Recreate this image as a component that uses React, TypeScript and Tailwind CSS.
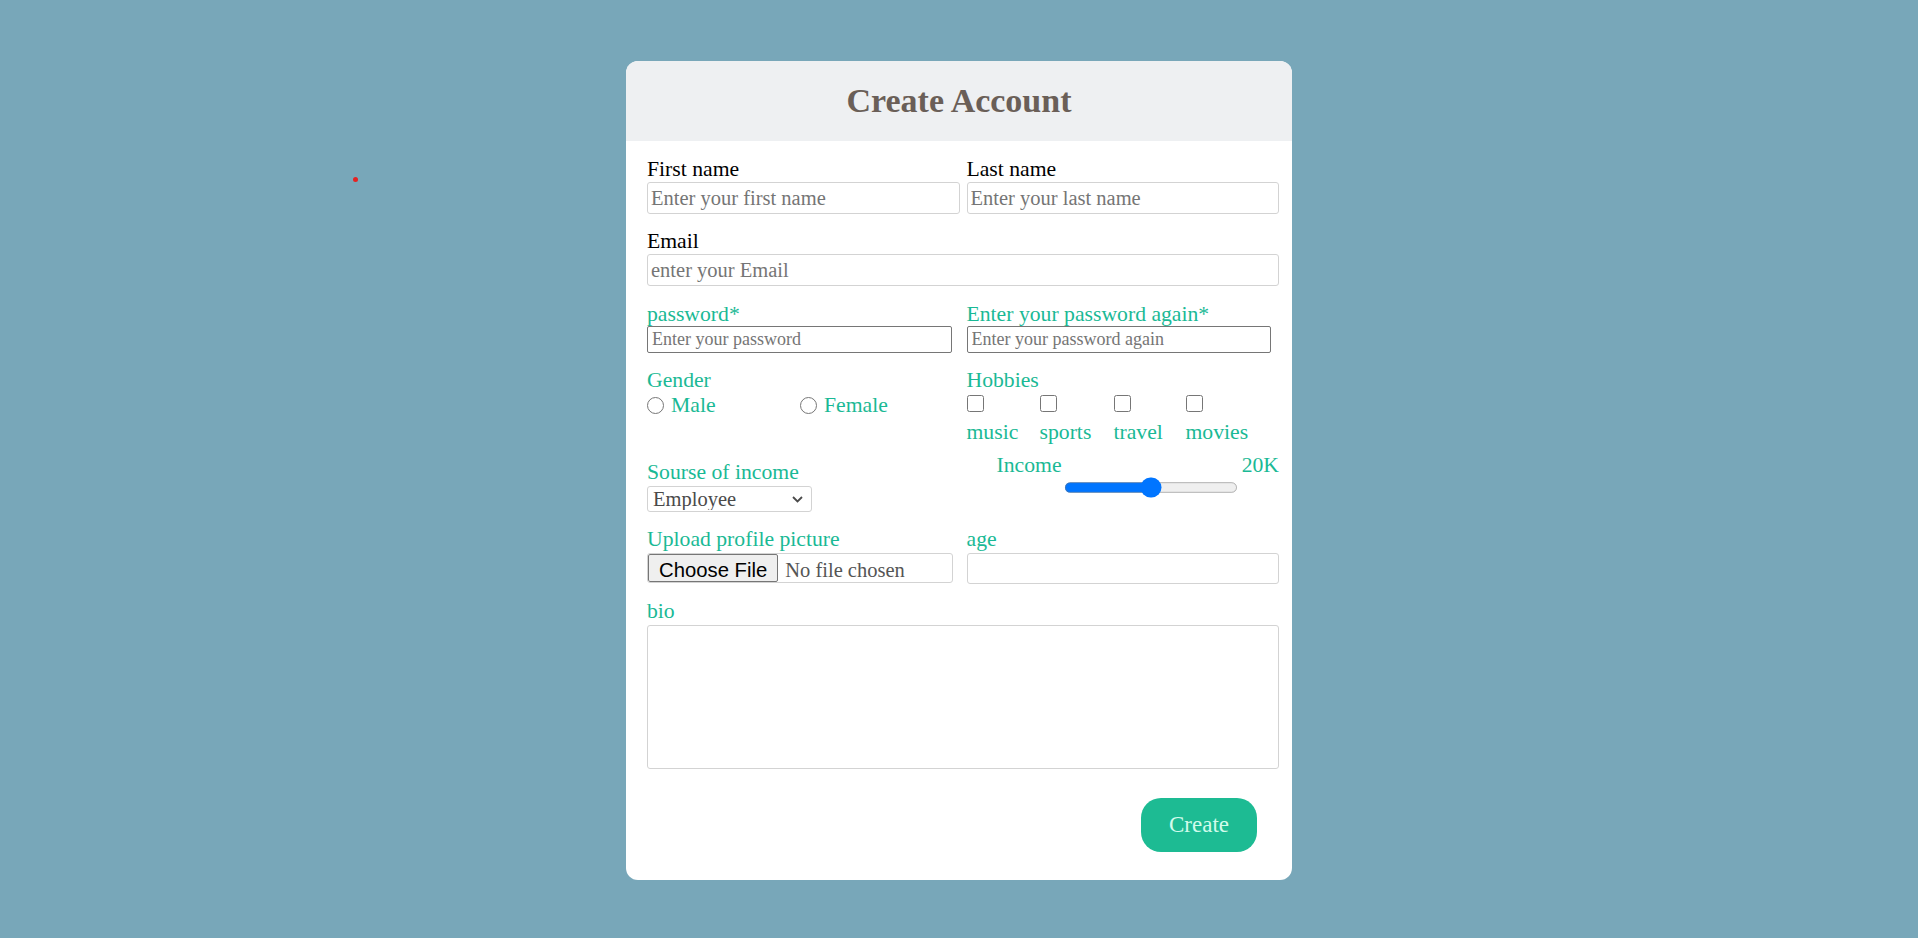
import React from 'react';

const HOBBIES = [
  { id: 'music', w: 'w-[73px]' },
  { id: 'sports', w: 'w-[74px]' },
  { id: 'travel', w: 'w-[72px]' },
  { id: 'movies', w: 'w-auto' },
];

const label = "block h-[24px] leading-[24px] text-[21.7px] text-[#1ab995] whitespace-nowrap";
const softInput =
  "block w-full border border-[#d3d3d3] rounded-[3px] bg-white px-[3px] text-[20.5px] text-black placeholder:text-[#757575] outline-none";

const App = () => {
  return (
    <div className="relative min-h-screen bg-[#78a7b9] pt-[61px] pb-[59px] font-['Liberation_Serif',serif]">
      {/* stray dot in the shot */}
      <div className="absolute left-[353px] top-[177px] w-[5px] h-[5px] rounded-full bg-[#e52222]" />

      <div className="mx-auto w-[666px] rounded-[12px] bg-white overflow-hidden">
        <div className="h-[80px] bg-[#eef0f2] flex items-center justify-center">
          <h1 className="text-[34px] font-bold leading-none text-[#6a5f58]">Create Account</h1>
        </div>

        <form className="pt-[16px] pl-[21px] pr-[13px] pb-[28px]" onSubmit={(e) => e.preventDefault()}>
          {/* names */}
          <div className="grid grid-cols-2 gap-x-[7px]">
            <div>
              <label className="block h-[24px] leading-[24px] text-[21.7px] text-black">First name</label>
              <input className={`${softInput} mt-[1px] h-[32px]`} placeholder="Enter your first name" />
            </div>
            <div>
              <label className="block h-[24px] leading-[24px] text-[21.7px] text-black">Last name</label>
              <input className={`${softInput} mt-[1px] h-[32px]`} placeholder="Enter your last name" />
            </div>
          </div>

          {/* email */}
          <div className="mt-[15px]">
            <label className="block h-[24px] leading-[24px] text-[21.7px] text-black">Email</label>
            <input className={`${softInput} mt-[1px] h-[32px]`} placeholder="enter your Email" />
          </div>

          {/* passwords */}
          <div className="mt-[16px] grid grid-cols-2 gap-x-[7px]">
            <div>
              <label className={label}>password*</label>
              <input
                type="password"
                className="block w-[305px] h-[27px] border border-[#767676] rounded-[2px] px-[4px] text-[18px] placeholder:text-[#757575] outline-none"
                placeholder="Enter your password"
              />
            </div>
            <div>
              <label className={label}>Enter your password again*</label>
              <input
                type="password"
                className="block w-[304px] h-[27px] border border-[#767676] rounded-[2px] px-[4px] text-[18px] placeholder:text-[#757575] outline-none"
                placeholder="Enter your password again"
              />
            </div>
          </div>

          {/* gender + hobbies */}
          <div className="mt-[15px] grid grid-cols-2 gap-x-[7px]">
            <div>
              <span className={label}>Gender</span>
              <div className="mt-[1px] flex h-[24px] items-center text-[21.7px] text-[#1ab995]">
                <label className="flex w-[153px] items-center gap-[7px]">
                  <input type="radio" name="gender" className="m-0 h-[17px] w-[17px]" />
                  Male
                </label>
                <label className="flex items-center gap-[7px]">
                  <input type="radio" name="gender" className="m-0 h-[17px] w-[17px]" />
                  Female
                </label>
              </div>
            </div>
            <div>
              <span className={label}>Hobbies</span>
              <div className="flex">
                {HOBBIES.map((h) => (
                  <label key={h.id} className={`${h.w} flex flex-col items-start`}>
                    <input type="checkbox" className="m-0 mt-[3px] h-[17px] w-[17px]" />
                    <span className="mt-[8px] h-[24px] leading-[24px] text-[21.7px] text-[#1ab995]">{h.id}</span>
                  </label>
                ))}
              </div>
            </div>
          </div>

          {/* income */}
          <div className="mt-[9px] grid grid-cols-2 gap-x-[7px]">
            <div className="pt-[7px]">
              <label className={label}>Sourse of income</label>
              <div className="relative mt-[2px] w-[165px]">
                <select className="block w-full h-[26px] appearance-none border border-[#d3d3d3] rounded-[3px] bg-white pl-[5px] text-[20.5px] leading-[22px] text-[#4a4a4a] outline-none">
                  <option>Employee</option>
                  <option>Self employed</option>
                  <option>Student</option>
                </select>
                <svg
                  className="pointer-events-none absolute right-[9px] top-[10px]"
                  width="11"
                  height="7"
                  viewBox="0 0 11 7"
                  fill="none"
                >
                  <path d="M1 1l4.5 4.5L10 1" stroke="#4a4a4a" strokeWidth="1.8" />
                </svg>
              </div>
            </div>
            <div>
              <div className="flex justify-between pl-[30px] h-[24px] leading-[24px] text-[21.7px] text-[#1ab995]">
                <span>Income</span>
                <span>20K</span>
              </div>
              <input
                type="range"
                min={0}
                max={100}
                defaultValue={50}
                className="block ml-[73px] m-0 w-[131.5px] [zoom:1.33]"
              />
            </div>
          </div>

          {/* upload + age */}
          <div className="mt-[15px] grid grid-cols-2 gap-x-[7px]">
            <div>
              <label className={label}>Upload profile picture</label>
              <input
                type="file"
                className="mt-[2px] block w-[306px] h-[30px] border border-[#d3d3d3] rounded-[3px] bg-white text-[20.5px] text-[#555] file:mr-[7px] file:h-full file:border file:border-[#767676] file:bg-[#efefef] file:rounded-[2px] file:px-[10px] file:font-['Liberation_Sans',Arial,sans-serif] file:text-[20.3px] file:text-black"
              />
            </div>
            <div>
              <label className={label}>age</label>
              <input type="number" className={`${softInput} mt-[2px] h-[31px] w-[312px]`} />
            </div>
          </div>

          {/* bio */}
          <div className="mt-[15px]">
            <label className={label}>bio</label>
            <textarea className="mt-[2px] block w-[632px] h-[144px] resize-none border border-[#d3d3d3] rounded-[3px] bg-white p-[3px] text-[20px] outline-none" />
          </div>

          <div className="mt-[29px] flex justify-end pr-[22px]">
            <button
              type="submit"
              className="h-[54px] w-[116px] rounded-[20px] bg-[#1dbb93] text-[23px] text-[#d2fbec]"
            >
              Create
            </button>
          </div>
        </form>
      </div>
    </div>
  );
};

export default App;
